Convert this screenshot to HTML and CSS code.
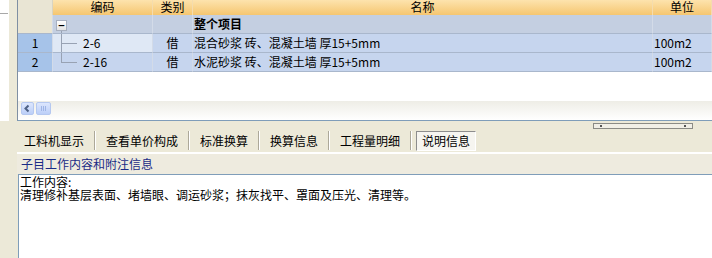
FILE: index.html
```html
<!DOCTYPE html>
<html>
<head>
<meta charset="utf-8">
<link rel="stylesheet" href="styles.css">
</head>
<body>
<div class="app">
  <div class="side">
    <div class="side-top"><div class="side-line"></div></div>
  </div>
  <div class="main">
    <div class="grid">
      <div class="row head">
        <div class="c rn"></div>
        <div class="c">编码</div>
        <div class="c">类别</div>
        <div class="c">名称</div>
        <div class="c">单位</div>
      </div>
      <div class="row group">
        <div class="c rn"></div>
        <div class="c code"><span class="minus">−</span><span class="tree t-top"></span></div>
        <div class="c"></div>
        <div class="c name"><b>整个项目</b></div>
        <div class="c"></div>
      </div>
      <div class="row data">
        <div class="c rn num">1</div>
        <div class="c code focus"><span class="tree t-mid"></span><span class="tree t-h"></span><span class="ctext">2-6</span></div>
        <div class="c cat">借</div>
        <div class="c name">混合砂浆 砖、混凝土墙 厚15+5mm</div>
        <div class="c unit">100m2</div>
      </div>
      <div class="row data">
        <div class="c rn num">2</div>
        <div class="c code"><span class="tree t-end"></span><span class="tree t-h"></span><span class="ctext">2-16</span></div>
        <div class="c cat">借</div>
        <div class="c name">水泥砂浆 砖、混凝土墙 厚15+5mm</div>
        <div class="c unit">100m2</div>
      </div>
      <div class="filler"></div>
      <div class="hscroll">
        <div class="sbtn">
          <svg width="11" height="11" viewBox="0 0 11 11"><polyline points="6.5,2.5 3.5,5.5 6.5,8.5" fill="none" stroke="#4d6185" stroke-width="2"/></svg>
        </div>
        <div class="sbtn thumb">
          <svg width="13" height="11" viewBox="0 0 13 11"><path d="M4.5 3v5M6.5 3v5M8.5 3v5" stroke="#9fb5e6" stroke-width="1"/></svg>
        </div>
      </div>
    </div>
    <div class="tabs">
      <div class="tab">工料机显示</div><div class="sep"></div>
      <div class="tab">查看单价构成</div><div class="sep"></div>
      <div class="tab">标准换算</div><div class="sep"></div>
      <div class="tab">换算信息</div><div class="sep"></div>
      <div class="tab">工程量明细</div><div class="sep"></div>
      <div class="tab active">说明信息</div>
      <div class="grip"><span></span><span></span></div>
    </div>
    <div class="wline"></div>
    <div class="infohead">子目工作内容和附注信息</div>
    <div class="textarea"><div class="tline">工作内容:</div><div class="tline">清理修补基层表面、堵墙眼、调运砂浆；抹灰找平、罩面及压光、清理等。</div></div>
  </div>
</div>
</body>
</html>
```
FILE: styles.css
```css
* { box-sizing: border-box; }
html, body { margin: 0; padding: 0; }
body {
  width: 712px;
  height: 258px;
  overflow: hidden;
  background: #ece9d8;
  font-family: "Noto Sans CJK SC", "Noto Sans", sans-serif;
  font-size: 12px;
  color: #000;
}
.app { display: flex; height: 258px; }
.side { width: 17px; flex: none; background: #ece9d8; }
.side-top { width: 9px; height: 121px; background: #fff; padding-top: 13px; }
.side-line { height: 1px; width: 8px; background: #a8a8a8; }
.main { flex: 1; display: flex; flex-direction: column; min-width: 0; }

.grid {
  height: 121px;
  flex: none;
  background: #fff;
  border-left: 1px solid #7f8fa3;
  border-bottom: 1px solid #7f9db9;
  display: flex;
  flex-direction: column;
}
.row {
  display: grid;
  grid-template-columns: 35px 100px 40px 460px 1fr;
}
.c {
  border-right: 1px solid #d3dbe8;
  white-space: nowrap;
  overflow: hidden;
}
.head { height: 15px; background: linear-gradient(#fde3ad, #f5c670); }
.head .c {
  text-align: center;
  line-height: 14px;
  overflow: visible;
  border-right-color: #f4dcae;
}
.head .rn { background: #e9e5d4; border-right-color: #d8d4c2; }
.group, .data { height: 19px; }
.group .c, .data .c {
  border-bottom: 1px solid #a9b7cc;
  line-height: 18px;
}
.group { background: #c4cfe1; }
.group .rn { background: #e9e5d4; }
.data { background: #c6d5ee; }
.data .rn { background: #a6c3e9; }
.num { text-align: center; }
.focus { background: #dfe8f5; }
.cat { text-align: center; }
.name { padding-left: 1px; }
.unit { padding-left: 1px; }
.code { position: relative; }
.ctext { padding-left: 30px; }
.minus {
  position: absolute;
  left: 3px;
  top: 5px;
  width: 11px;
  height: 11px;
  border: 1px solid #a8b0bf;
  background: linear-gradient(#ffffff, #e4e4e4);
  line-height: 8px;
  text-align: center;
  font-size: 11px;
  font-weight: bold;
  color: #000;
}
.tree { position: absolute; background: #98a2b3; }
.t-top { left: 8px; top: 16px; width: 1px; height: 3px; }
.t-mid { left: 8px; top: 0; width: 1px; height: 19px; }
.t-end { left: 8px; top: 0; width: 1px; height: 9px; }
.t-h { left: 8px; top: 9px; width: 16px; height: 1px; }
.filler { flex: 1; }
.hscroll {
  height: 19px;
  display: flex;
  align-items: flex-start;
  gap: 2px;
  padding-left: 3px;
  padding-top: 1px;
  background: linear-gradient(#eeede6, #ffffff);
}
.sbtn {
  width: 13px;
  height: 13px;
  border: 1px solid #b5c8f0;
  border-radius: 2px;
  background: linear-gradient(#dce6fd, #bccff8);
  display: flex;
  align-items: center;
  justify-content: center;
}
.thumb { width: 15px; }

.tabs {
  position: relative;
  height: 31px;
  flex: none;
  display: flex;
  align-items: center;
  padding: 9px 0 1px 7px;
  background: #ece9d8;
}
.tab { padding: 0 10px; line-height: 20px; height: 20px; }
.tabs .tab:first-child { padding-left: 0; }
.sep { width: 2px; height: 19px; border-left: 1px solid #aca899; border-right: 1px solid #fff; }
.tab.active {
  margin-left: 4px;
  padding: 0 5px;
  border: 1px solid;
  border-color: #8d8d8d #ffffff #ffffff #8d8d8d;
  background: #f6f5f0;
  line-height: 18px;
}
.grip {
  position: absolute;
  left: 576px;
  top: 2px;
  width: 100px;
  height: 6px;
  border: 1px solid #8b8b85;
  background: #f1efe6;
  display: flex;
  justify-content: space-between;
  align-items: center;
  padding: 0 6px;
}
.grip span { width: 2px; height: 2px; background: #555; }
.wline { height: 2px; background: #fff; flex: none; }
.infohead {
  height: 20px;
  flex: none;
  padding-left: 4px;
  line-height: 19px;
  color: #1a2b86;
  background: #eeebdf;
}
.textarea {
  flex: 1;
  margin-left: 1px;
  background: #fff;
  border-top: 1px solid #7f9db9;
  border-left: 1px solid #7f9db9;
  padding: 0 0 0 1px;
}
.tline { height: 13px; line-height: 13px; white-space: nowrap; }
```
